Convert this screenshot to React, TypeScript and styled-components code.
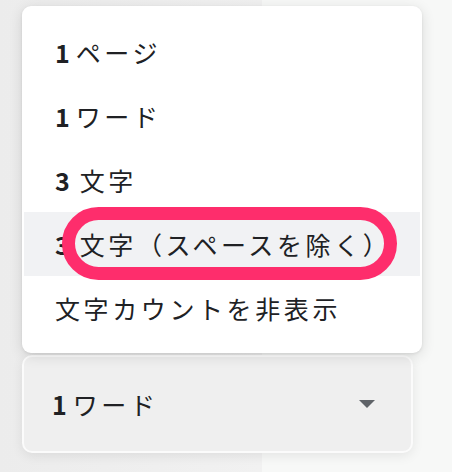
import React from "react";
import styled, { createGlobalStyle } from "styled-components";

const Global = createGlobalStyle`
  html, body { margin: 0; padding: 0; }
  body {
    width: 452px;
    height: 472px;
    overflow: hidden;
    background: linear-gradient(to right, #ececec 0, #f1f1f1 262px, #f7f8f7 262px, #f7f8f7 100%);
    font-family: "Noto Sans CJK JP", "Noto Sans", sans-serif;
    color: #202124;
  }
`;

const Stage = styled.div`
  display: flex;
  flex-direction: column;
  align-items: flex-start;
  padding: 6px 0 0 22px;
`;

const Menu = styled.div`
  position: relative;
  width: 400px;
  box-sizing: border-box;
  padding: 14px 2px 13px;
  background: #ffffff;
  border-radius: 9px;
  box-shadow: 0 3px 14px rgba(0, 0, 0, 0.12), 0 1px 3px rgba(0, 0, 0, 0.08);
`;

const Item = styled.div<{ $active?: boolean }>`
  height: 64px;
  display: flex;
  align-items: center;
  padding-left: 31px;
  font-size: 25px;
  letter-spacing: 3.6px;
  white-space: nowrap;
  background: ${(p) => (p.$active ? "#f1f2f4" : "transparent")};
`;

const Num = styled.b<{ $gap?: number }>`
  font-weight: 700;
  letter-spacing: 0;
  margin-right: ${(p) => p.$gap ?? 6}px;
`;

const Highlight = styled.div`
  position: absolute;
  left: 40px;
  top: 201px;
  width: 335px;
  height: 73px;
  box-sizing: border-box;
  border: 13px solid #fe2d6c;
  border-radius: 37px;
  pointer-events: none;
`;

const Select = styled.div`
  margin-top: 2px;
  width: 391px;
  height: 98px;
  box-sizing: border-box;
  border: 2px solid #fbfbfb;
  border-radius: 10px;
  background: #efefef;
  box-shadow: 0 3px 12px rgba(0, 0, 0, 0.08);
  display: flex;
  align-items: center;
  justify-content: space-between;
  padding: 0 36px 0 28px;
  font-size: 25px;
  letter-spacing: 3.6px;
`;

const Caret = styled.svg`
  width: 16px;
  height: 8px;
  display: block;
`;

export default function App() {
  return (
    <>
      <Global />
      <Stage>
        <Menu>
          <Item>
            <Num>1</Num>ページ
          </Item>
          <Item>
            <Num>1</Num>ワード
          </Item>
          <Item>
            <Num $gap={10}>3</Num>文字
          </Item>
          <Item $active>
            <Num $gap={10}>3</Num>文字（スペースを除く）
          </Item>
          <Item>文字カウントを非表示</Item>
          <Highlight />
        </Menu>
        <Select>
          <span>
            <Num>1</Num>ワード
          </span>
          <Caret viewBox="0 0 16 8">
            <path d="M0 0 L16 0 L8 8 Z" fill="#5f6368" />
          </Caret>
        </Select>
      </Stage>
    </>
  );
}
